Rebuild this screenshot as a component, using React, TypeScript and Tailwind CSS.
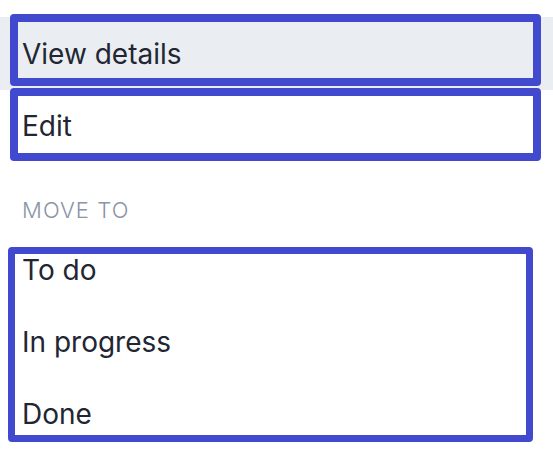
import React from "react";

const font = { fontFamily: "Inter, 'Noto Sans', sans-serif" };

function Row({ label, children }: { label: string; children?: React.ReactNode }) {
  return (
    <div className="relative flex h-[72px] items-center pl-[22px] text-[28px] leading-none">
      <span>{label}</span>
      {children}
    </div>
  );
}

export default function App() {
  return (
    <div className="w-[553px] h-[459px] bg-white pt-[17px] text-[#222632]" style={font}>
      <div className="relative flex h-[73px] items-center bg-[#eaeef2] pl-[22px] text-[28px] leading-none">
        <span>View details</span>
        <div className="pointer-events-none absolute left-[10px] top-[-3px] h-[72px] w-[531px] rounded-[4px] border-[8px] border-[#4149cf]" />
      </div>
      <Row label="Edit">
        <div className="pointer-events-none absolute left-[10px] top-[-2px] h-[73px] w-[531px] rounded-[4px] border-[8px] border-[#4149cf]" />
      </Row>
      <div className="h-[72px] pl-[22px] pt-[37px] text-[22px] font-light uppercase leading-none tracking-[0.05em] text-[#8a94a6]">
        Move to
      </div>
      <div className="relative flex flex-col">
        <Row label="To do" />
        <Row label="In progress" />
        <Row label="Done" />
        <div className="pointer-events-none absolute left-[8px] top-[13px] h-[195px] w-[525px] rounded-[4px] border-[7px] border-[#4149cf]" />
      </div>
    </div>
  );
}
